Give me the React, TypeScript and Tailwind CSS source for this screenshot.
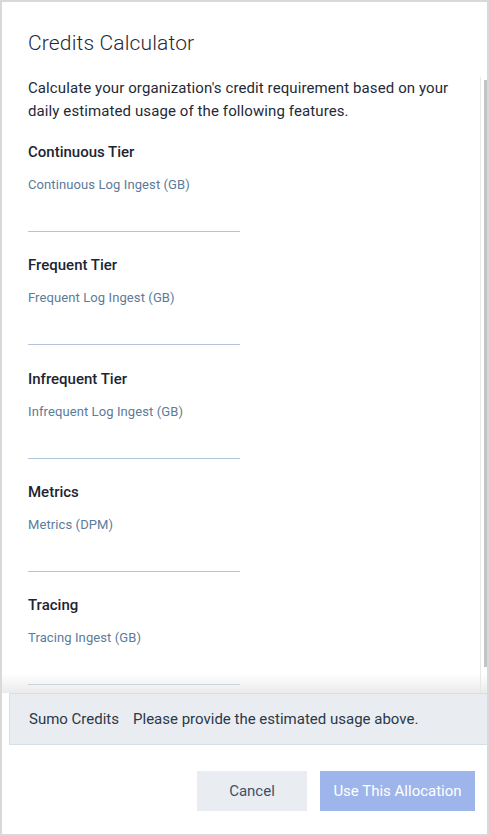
import React from "react";

const sections = [
  { title: "Continuous Tier", label: "Continuous Log Ingest (GB)" },
  { title: "Frequent Tier", label: "Frequent Log Ingest (GB)" },
  { title: "Infrequent Tier", label: "Infrequent Log Ingest (GB)" },
  { title: "Metrics", label: "Metrics (DPM)" },
  { title: "Tracing", label: "Tracing Ingest (GB)" },
];

export default function App() {
  return (
    <div
      className="w-[489px] h-[836px] bg-white border-2 border-[#d9d9d9] flex flex-col overflow-hidden"
      style={{ fontFamily: "Roboto, 'Liberation Sans', sans-serif" }}
    >
      <div className="pl-[26px] pt-[27px] h-[75px] shrink-0">
        <h1 className="text-[21px] leading-[28px] font-light text-[#1f2937] tracking-[0.15px]">
          Credits Calculator
        </h1>
      </div>
      <div className="relative h-[616px] shrink-0 flex">
        <div className="flex-1 overflow-hidden pl-[26px] pr-[20px]">
          <p className="text-[15px] leading-[23px] text-[#1f2a37] tracking-[0.1px]">
            Calculate your organization's credit requirement based on your daily estimated usage of the following features.
          </p>
          <div className="flex flex-col gap-[23.25px] mt-[19px]">
            {sections.map((s) => (
              <div key={s.title} className="flex flex-col">
                <div className="text-[15px] leading-[20px] font-medium text-[#1c2533]">{s.title}</div>
                <div className="mt-[14px] text-[13px] leading-[18px] text-[#5b7b9a] tracking-[0.1px]">{s.label}</div>
                <div className="w-[212px] h-[38px] border-b border-[#b3c6d9]" />
              </div>
            ))}
          </div>
        </div>
        <div className="w-[7px] shrink-0 border-l border-[#e8e8e8] flex pt-[3px] pb-[26px] pl-[3px]">
          <div className="w-[3px] h-full bg-[#c4c4c4]" />
        </div>
        <div className="absolute left-0 right-0 bottom-0 h-[20px] bg-gradient-to-b from-transparent to-[#e6e6e6]/80 pointer-events-none" />
      </div>
      <div className="ml-[7px] h-[52px] shrink-0 bg-[#e9edf1] border border-r-0 border-[#d6dee6] flex items-center pl-[19px] text-[15px] text-[#2b3848]">
        <span>Sumo Credits</span>
        <span className="ml-[14px]">Please provide the estimated usage above.</span>
      </div>
      <div className="flex justify-end gap-[13px] pr-[12px] pt-[26px]">
        <button className="w-[110px] h-[40px] bg-[#e9edf1] text-[15px] text-[#3d5068]">Cancel</button>
        <button className="w-[155px] h-[40px] bg-[#9db5ea] text-[15px] text-white">Use This Allocation</button>
      </div>
    </div>
  );
}
